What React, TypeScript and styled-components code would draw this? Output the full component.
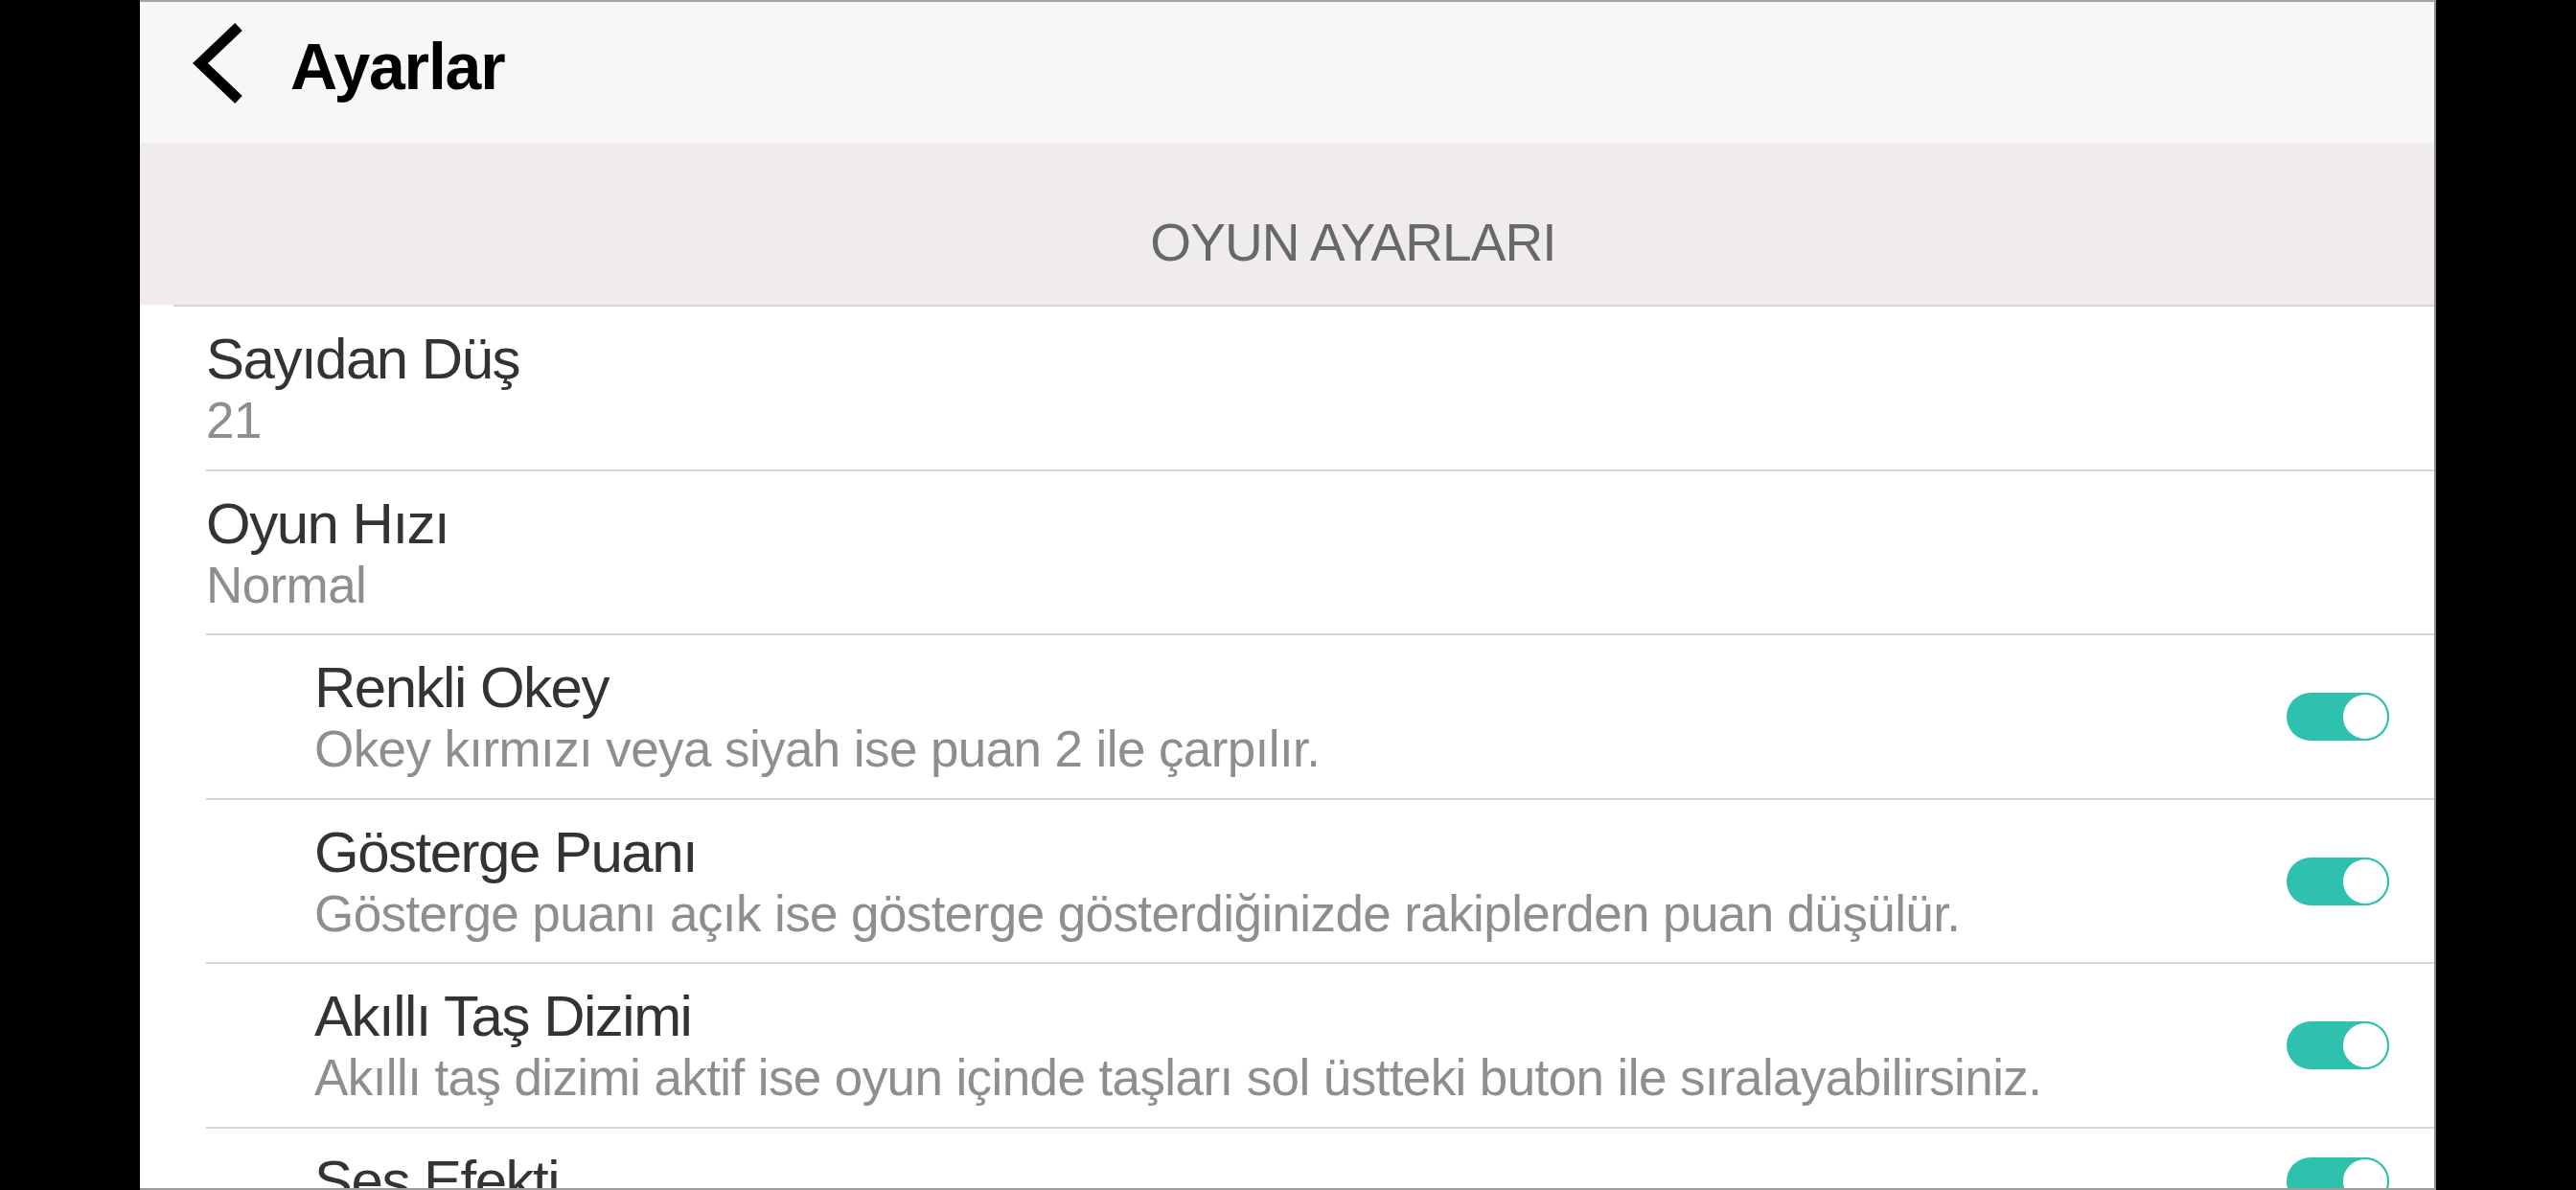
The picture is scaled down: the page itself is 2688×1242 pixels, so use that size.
import React from 'react';
import styled, { createGlobalStyle } from 'styled-components';

/**
 * Settings screen ("Ayarlar") of the okey game, in a letterboxed frame
 */
const GlobalStyle = createGlobalStyle`
  html, body {
    margin: 0;
    padding: 0;
    background: #000;
  }
  body {
    font-family: 'Liberation Sans', Arial, Helvetica, sans-serif;
    overflow: hidden;
  }
`;

const colors = {
  teal: '#2ec1ae',
  title: '#333333',
  muted: '#8e8e8e',
  line: '#d6d6d6',
};

interface Setting {
  title: string;
  detail?: string;
  deep?: boolean;
  toggle?: boolean;
}

const settings: Setting[] = [
  { title: 'Sayıdan Düş', detail: '21' },
  { title: 'Oyun Hızı', detail: 'Normal' },
  { title: 'Renkli Okey', detail: 'Okey kırmızı veya siyah ise puan 2 ile çarpılır.', deep: true, toggle: true },
  {
    title: 'Gösterge Puanı',
    detail: 'Gösterge puanı açık ise gösterge gösterdiğinizde rakiplerden puan düşülür.',
    deep: true,
    toggle: true,
  },
  {
    title: 'Akıllı Taş Dizimi',
    detail: 'Akıllı taş dizimi aktif ise oyun içinde taşları sol üstteki buton ile sıralayabilirsiniz.',
    deep: true,
    toggle: true,
  },
  { title: 'Ses Efekti', deep: true, toggle: true },
];

const BackIcon = () => (
  <svg width="60" height="90" viewBox="0 0 60 90">
    <path d="M52 7 L12 45 L52 83" fill="none" stroke="#000" strokeWidth="11" strokeLinejoin="miter" />
  </svg>
);

const App = () => {
  return (
    <Page>
      <GlobalStyle />
      <Screen>
        <Header>
          <BackButton>
            <BackIcon />
          </BackButton>
          <HeaderTitle>Ayarlar</HeaderTitle>
        </Header>
        <SectionHeader>OYUN AYARLARI</SectionHeader>
        <List>
          {settings.map((s, i) => (
            <React.Fragment key={s.title}>
              <Divider $inset={i === 0 ? 35 : 69} />
              <Row $compact={!s.detail}>
                <TextBlock $deep={s.deep} $compact={!s.detail}>
                  <RowTitle>{s.title}</RowTitle>
                  {s.detail && <RowDetail>{s.detail}</RowDetail>}
                </TextBlock>
                {s.toggle && (
                  <Toggle>
                    <Knob />
                  </Toggle>
                )}
              </Row>
            </React.Fragment>
          ))}
        </List>
      </Screen>
    </Page>
  );
};

export default App;

/** styled components */
const Page = styled.div`
  display: flex;
  justify-content: center;
  width: 100%;
  height: 1242px;
  background: #000;
`;

const Screen = styled.div`
  width: 2396px;
  height: 1242px;
  box-sizing: border-box;
  background: #fff;
  border-top: 2px solid #a4a4a4;
  border-bottom: 2px solid #9c9c9c;
  border-right: 2px solid #8a8a8a;
  overflow: hidden;
  display: flex;
  flex-direction: column;
`;

const Header = styled.div`
  flex-shrink: 0;
  height: 147px;
  box-sizing: border-box;
  display: flex;
  align-items: flex-start;
  padding: 19px 0 0 51px;
  background: #f7f7f7;
`;

const BackButton = styled.div`
  display: flex;
  width: 60px;
  height: 90px;
  margin-right: 46px;
`;

const HeaderTitle = styled.h1`
  margin: 8px 0 0;
  font-size: 68px;
  line-height: 80px;
  font-weight: 700;
  letter-spacing: -1.2px;
  color: #000;
`;

const SectionHeader = styled.div`
  flex-shrink: 0;
  height: 169px;
  box-sizing: border-box;
  padding: 74px 0 0 138px;
  background: #efebee;
  text-align: center;
  font-size: 55px;
  line-height: 60px;
  letter-spacing: -0.9px;
  color: #666966;
`;

const List = styled.div`
  display: flex;
  flex-direction: column;
`;

const Divider = styled.div<{ $inset: number }>`
  height: 2px;
  margin-left: ${(p) => p.$inset}px;
  background: ${colors.line};
`;

const Row = styled.div<{ $compact?: boolean }>`
  display: flex;
  align-items: center;
  height: ${(p) => (p.$compact ? 110 : 169.6)}px;
  box-sizing: border-box;
  padding-right: 47px;
`;

const TextBlock = styled.div<{ $deep?: boolean; $compact?: boolean }>`
  display: flex;
  flex-direction: column;
  align-self: ${(p) => (p.$compact ? 'center' : 'stretch')};
  padding-top: ${(p) => (p.$compact ? 0 : 22)}px;
  padding-left: ${(p) => (p.$deep ? 182 : 69)}px;
`;

const RowTitle = styled.div`
  font-size: 60px;
  line-height: 66px;
  letter-spacing: -1.5px;
  color: ${colors.title};
`;

const RowDetail = styled.div`
  font-size: 53px;
  line-height: 62px;
  letter-spacing: -0.6px;
  color: ${colors.muted};
`;

const Toggle = styled.span`
  display: flex;
  justify-content: flex-end;
  flex-shrink: 0;
  width: 107px;
  height: 50px;
  margin-left: auto;
  border-radius: 25px;
  background: ${colors.teal};
`;

const Knob = styled.span`
  width: 50px;
  height: 50px;
  box-sizing: border-box;
  border-radius: 50%;
  border: 2px solid ${colors.teal};
  background: #fff;
`;
